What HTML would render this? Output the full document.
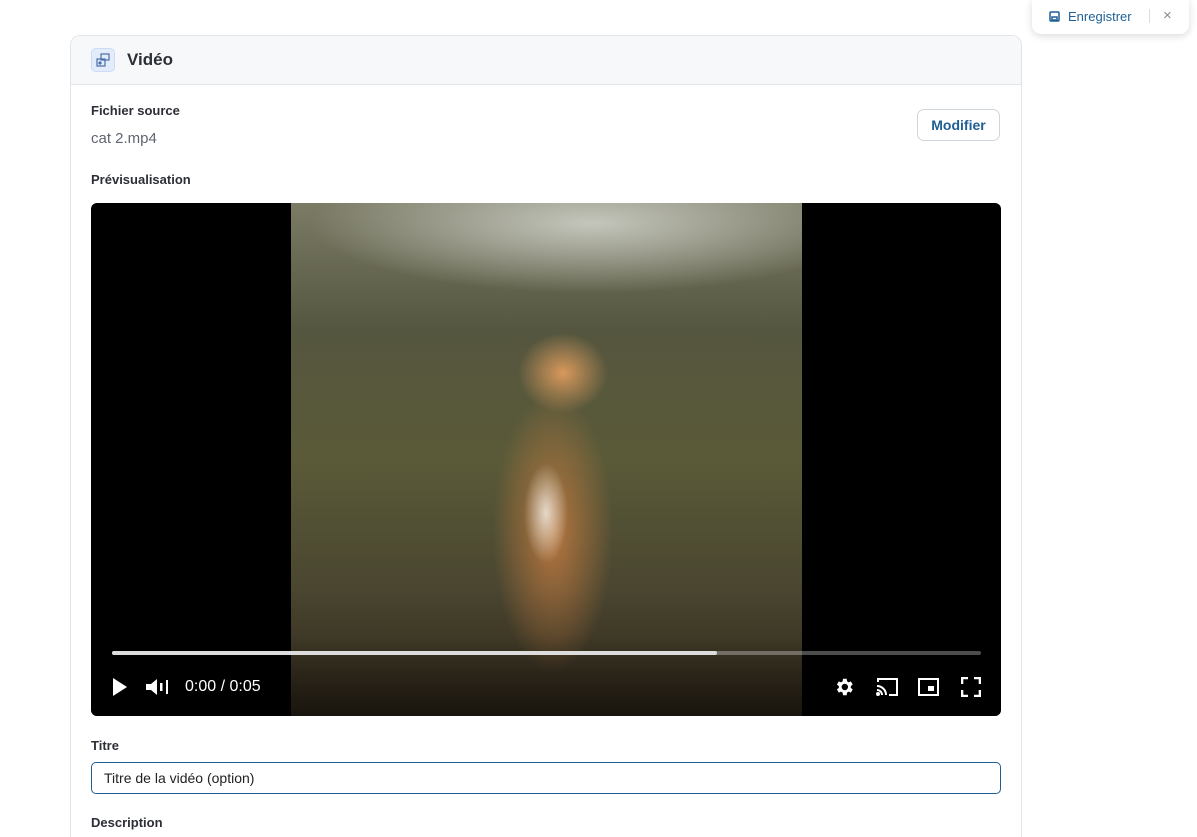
<!DOCTYPE html>
<html style="height:837px;overflow:hidden"><head><meta charset="utf-8"><style>
body{margin:0;background:#fff;font-family:"Liberation Sans",sans-serif;width:1197px;height:837px;overflow:hidden;position:relative;color:#1f2937}
.card{position:absolute;left:70px;top:35px;width:950px;height:810px;border:1px solid #e2e4e8;border-bottom:none;border-radius:10px 10px 0 0;overflow:hidden}
.hdr{height:48px;background:#f7f8fa;border-bottom:1px solid #e2e4e8;position:relative}
.ico{position:absolute;left:20px;top:12px;width:24px;height:24px;background:#e3ecfa;border:1px solid #cddcf3;border-radius:5px;box-sizing:border-box}
.hdr h1{position:absolute;left:56px;top:14px;margin:0;font-size:17px;font-weight:bold;color:#2c2f36}
.lbl{position:absolute;font-size:13px;font-weight:bold;color:#2c2f36}
.btn{position:absolute;left:846px;top:73px;width:83px;height:32px;border:1px solid #cfd5dc;border-radius:7px;box-sizing:border-box;font-size:14px;color:#1e5f96;text-align:center;line-height:31px;font-weight:bold}
.vid{position:absolute;left:20px;top:167px;width:910px;height:513px;background:#000;border-radius:6px;overflow:hidden}
.img{position:absolute;left:200px;top:0;width:511px;height:513px;
background:
radial-gradient(ellipse 45px 40px at 272px 170px,rgba(230,160,95,.9),transparent 100%),
radial-gradient(ellipse 22px 50px at 255px 310px,rgba(240,235,225,.85),transparent 100%),
radial-gradient(ellipse 60px 140px at 262px 330px,rgba(200,125,65,.85),transparent 100%),
radial-gradient(ellipse 280px 70px at 300px 20px,#c4c6bc,transparent 100%),
linear-gradient(#7b7b66 0%,#55563f 25%,#5a5a38 50%,#4a4630 75%,#2d2418 100%)}
.ov{position:absolute;left:0;right:0;bottom:0;height:80px;background:linear-gradient(transparent,rgba(0,0,0,.45))}
.bar{position:absolute;left:21px;top:448px;width:869px;height:4px;background:rgba(255,255,255,.3);border-radius:2px}
.bar i{display:block;width:605px;height:4px;background:#ddd;border-radius:2px}
.t{position:absolute;left:94px;top:475px;color:#fff;font-size:16px}
input{position:absolute;left:20px;top:726px;width:910px;height:32px;box-sizing:border-box;border:1px solid #1e5f96;border-radius:5px;font:14px "Liberation Sans",sans-serif;padding:0 12px;color:#222}
.save{position:absolute;left:1032px;top:0;width:157px;height:34px;background:#fff;border-radius:0 0 9px 9px;box-shadow:0 2px 8px rgba(0,0,0,.15);font-size:13px;color:#1e5f96}
</style></head><body>
<div class="card">
 <div class="hdr"><div class="ico"><svg width="22" height="22" viewBox="0 0 22 22" fill="none" stroke="#4a6fa5" stroke-width="1.2"><rect x="9" y="5" width="8" height="6"/><rect x="5" y="10" width="8" height="7"/><circle cx="8" cy="14" r="1" fill="#4a6fa5"/></svg></div><h1>Vidéo</h1></div>
 <div class="lbl" style="left:20px;top:67px">Fichier source</div>
 <div style="position:absolute;left:20px;top:94px;font-size:15px;color:#5f6670">cat 2.mp4</div>
 <div class="btn">Modifier</div>
 <div class="lbl" style="left:20px;top:136px">Prévisualisation</div>
 <div class="vid"><div class="img"></div><div class="ov"></div>
  <div class="bar"><i></i></div>
  <svg style="position:absolute;left:20px;top:474px" width="18" height="20"><path d="M2 1L16 10L2 19Z" fill="#fff"/></svg>
  <svg style="position:absolute;left:54px;top:474px" width="28" height="20"><path d="M1 7h5l6-5v16l-6-5H1Z" fill="#fff"/><rect x="15" y="6" width="2.5" height="8" fill="#fff"/><rect x="21" y="3" width="2" height="14" fill="#fff"/></svg>
  <div class="t">0:00 / 0:05</div>
  <svg style="position:absolute;left:742px;top:473px" width="22" height="22" viewBox="0 0 24 24"><path fill="#fff" d="M19.4 13a7.5 7.5 0 000-2l2.1-1.6-2-3.5-2.5 1a7 7 0 00-1.7-1L14.9 3h-4l-.4 2.9a7 7 0 00-1.7 1l-2.5-1-2 3.5L6.4 11a7.5 7.5 0 000 2l-2.1 1.6 2 3.5 2.5-1a7 7 0 001.7 1l.4 2.9h4l.4-2.9a7 7 0 001.7-1l2.5 1 2-3.5ZM12.9 15.5a3.5 3.5 0 110-7 3.5 3.5 0 010 7z"/></svg>
  <svg style="position:absolute;left:784px;top:474px" width="24" height="20" viewBox="0 0 24 20" fill="none" stroke="#fff" stroke-width="2"><path d="M3 5V2h19v16h-8"/><path d="M2 9a9 9 0 019 9M2 13a5 5 0 015 5"/><circle cx="3" cy="17" r="1" fill="#fff"/></svg>
  <svg style="position:absolute;left:826px;top:474px" width="24" height="20" fill="none" stroke="#fff" stroke-width="2"><rect x="2" y="2" width="19" height="16"/><rect x="11" y="9" width="6" height="5" fill="#fff" stroke="none"/></svg>
  <svg style="position:absolute;left:870px;top:474px" width="20" height="20" fill="none" stroke="#fff" stroke-width="2.6"><path d="M1 7V1h6M13 1h6v6M19 13v6h-6M7 19H1v-6"/></svg>
 </div>
 <div class="lbl" style="left:20px;top:702px">Titre</div>
 <input value="Titre de la vidéo (option)">
 <div class="lbl" style="left:20px;top:779px">Description</div>
</div>
<div class="save"><svg style="position:absolute;left:17px;top:11px" width="11" height="11" fill="none" stroke="#1e5f96" stroke-width="1.5"><rect x="1" y="1" width="9" height="9" rx="1"/><rect x="3" y="6" width="5" height="3"/></svg><span style="position:absolute;left:36px;top:9px">Enregistrer</span><span style="position:absolute;left:117px;top:9px;width:1px;height:14px;background:#ddd"></span><span style="position:absolute;left:131px;top:7px;color:#888;font-size:15px">×</span></div>
</body></html>
